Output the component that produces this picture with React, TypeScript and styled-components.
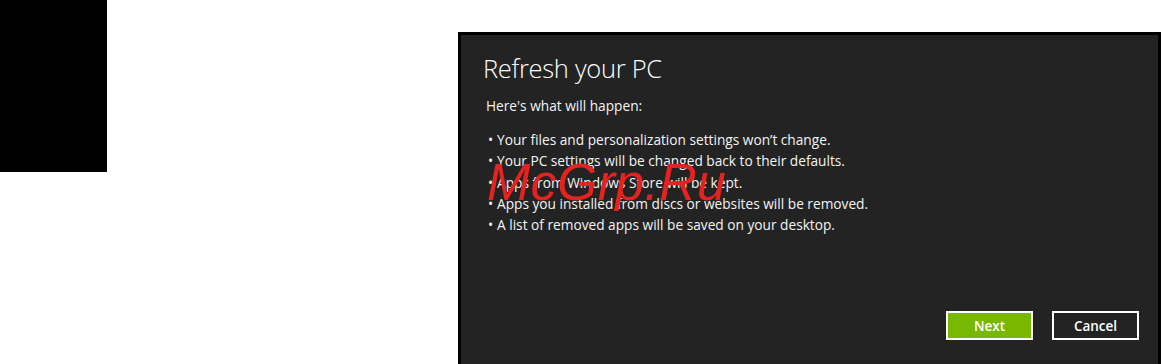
import React from "react";
import styled, { createGlobalStyle } from "styled-components";

const GlobalStyle = createGlobalStyle`
  html, body {
    margin: 0;
    padding: 0;
    background: #ffffff;
    overflow: hidden;
  }
`;

const bullets = [
  "Your files and personalization settings won’t change.",
  "Your PC settings will be changed back to their defaults.",
  "Apps from Windows Store will be kept.",
  "Apps you installed from discs or websites will be removed.",
  "A list of removed apps will be saved on your desktop.",
];

const App = () => {
  return (
    <>
      <GlobalStyle />
      <Page>
        <BlackBlock />
        <Dialog>
          <Title>Refresh your PC</Title>
          <Intro>Here's what will happen:</Intro>
          <List>
            {bullets.map(text => (
              <Item key={text}>
                <Dot>•</Dot>
                {text}
              </Item>
            ))}
          </List>
          <Watermark>McGrp.Ru</Watermark>
          <Actions>
            <Button $primary>Next</Button>
            <Button>Cancel</Button>
          </Actions>
        </Dialog>
      </Page>
    </>
  );
};
export default App;

const Page = styled.div`
  display: flex;
  align-items: flex-start;
  width: 1162px;
  height: 364px;
  overflow: hidden;
`;

const BlackBlock = styled.div`
  width: 107px;
  height: 172px;
  background: #000000;
  flex-shrink: 0;
`;

const Dialog = styled.div`
  position: relative;
  display: flex;
  flex-direction: column;
  box-sizing: border-box;
  margin: 32px 0 0 351px;
  width: 703px;
  height: 340px;
  border: 3px solid #000000;
  background: #232323;
  padding: 15px 20px 0 22px;
  color: #ffffff;
  font-family: "Open Sans", "Liberation Sans", sans-serif;
`;

const Title = styled.h1`
  margin: 0;
  font-size: 25.5px;
  font-weight: 300;
  line-height: 36px;
  letter-spacing: -0.3px;
`;

const Intro = styled.p`
  margin: 11px 0 0 3px;
  font-size: 13.7px;
  line-height: 18px;
  color: #f4f4f4;
`;

const List = styled.ul`
  list-style: none;
  margin: 14px 0 0 5px;
  padding: 0;
`;

const Item = styled.li`
  font-size: 13.7px;
  line-height: 21.3px;
  color: #f4f4f4;
  white-space: nowrap;
`;

const Dot = styled.span`
  display: inline-block;
  width: 9px;
`;

const Watermark = styled.div`
  position: absolute;
  left: 26px;
  top: 121px;
  font-family: "Liberation Sans", sans-serif;
  font-size: 52px;
  line-height: 1;
  font-style: italic;
  color: #e3231f;
  letter-spacing: 0.3px;
  pointer-events: none;
`;

const Actions = styled.div`
  display: flex;
  justify-content: flex-end;
  gap: 19px;
  margin-top: auto;
  margin-bottom: 29px;
  margin-right: -1px;
`;

const Button = styled.button<{ $primary?: boolean }>`
  box-sizing: border-box;
  width: 87px;
  height: 29px;
  border: 2px solid #ffffff;
  border-radius: 0;
  background: ${p => (p.$primary ? "#78b800" : "#232323")};
  color: #ffffff;
  font-family: "Open Sans", "Liberation Sans", sans-serif;
  font-size: 13.5px;
  font-weight: 600;
  padding: 0;
  cursor: pointer;
`;
